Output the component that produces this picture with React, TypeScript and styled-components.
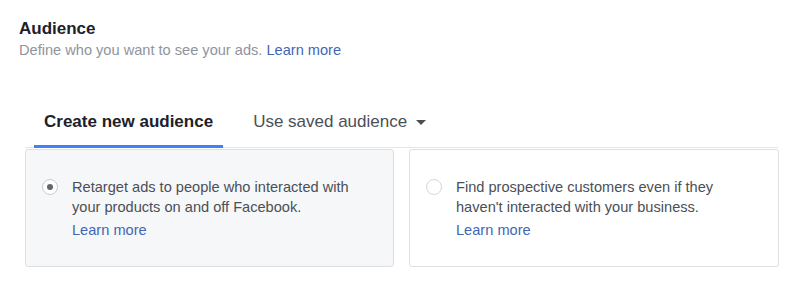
import React from "react";
import styled, { createGlobalStyle } from "styled-components";

const GlobalStyle = createGlobalStyle`
	html, body {
		margin: 0;
		padding: 0;
		background: #ffffff;
	}
	body {
		font-family: "Liberation Sans", Arial, Helvetica, sans-serif;
		-webkit-font-smoothing: antialiased;
	}
`;

const Page = styled.div`
	width: 800px;
	height: 292px;
	box-sizing: border-box;
	padding: 19px 22px 0 19px;
`;

const Title = styled.h2`
	margin: 0;
	font-size: 17px;
	line-height: 20px;
	font-weight: bold;
	color: #1d2129;
`;

const Subtitle = styled.p`
	margin: 1px 0 0;
	font-size: 14.6px;
	line-height: 20px;
	color: #90949c;
`;

const Link = styled.a`
	color: #4267b2;
	text-decoration: none;
	cursor: pointer;
`;

const Section = styled.div`
	margin: 42px 0 0 6px;
`;

const TabBar = styled.div`
	display: flex;
	align-items: flex-end;
	gap: 20px;
	padding-left: 9px;
	border-bottom: 1px solid #e4e6eb;
`;

const Tab = styled.button<{ $active?: boolean }>`
	display: flex;
	align-items: center;
	gap: 9px;
	height: 46px;
	padding: 0 10px 4px;
	margin-bottom: -1px;
	border: 0;
	border-bottom: 3px solid ${(p) => (p.$active ? "#4080ff" : "transparent")};
	background: none;
	font-family: inherit;
	font-size: 17px;
	font-weight: ${(p) => (p.$active ? "bold" : "normal")};
	color: ${(p) => (p.$active ? "#1d2129" : "#4b4f56")};
	cursor: pointer;
`;

const Caret = styled.span`
	width: 0;
	height: 0;
	margin-top: 1px;
	border-left: 5px solid transparent;
	border-right: 5px solid transparent;
	border-top: 5px solid #4b4f56;
`;

const Cards = styled.div`
	display: grid;
	grid-template-columns: 369px 370px;
	gap: 15px;
	margin-top: 1px;
`;

const Card = styled.label<{ $selected?: boolean }>`
	display: flex;
	align-items: flex-start;
	gap: 14px;
	box-sizing: border-box;
	height: 118px;
	padding: 27px 16px 0 16px;
	border: 1px solid #dddfe2;
	border-radius: 3px;
	background: ${(p) => (p.$selected ? "#f6f7f9" : "#ffffff")};
	cursor: pointer;
`;

const Radio = styled.span<{ $checked?: boolean }>`
	flex: none;
	display: flex;
	align-items: center;
	justify-content: center;
	width: 16px;
	height: 16px;
	margin-top: 2px;
	box-sizing: border-box;
	border-radius: 50%;
	border: 1px solid ${(p) => (p.$checked ? "#c7cbd1" : "#d3d6db")};
	background: #ffffff;

	&::after {
		content: "";
		display: ${(p) => (p.$checked ? "block" : "none")};
		width: 6px;
		height: 6px;
		border-radius: 50%;
		background: #606770;
	}
`;

const CardBody = styled.div`
	max-width: 292px;
	font-size: 14.6px;
	line-height: 20px;
	color: #4b4f56;
`;

const CardLink = styled(Link)`
	display: block;
	margin-top: 3px;
`;

const options = [
	{
		text: "Retarget ads to people who interacted with your products on and off Facebook.",
		selected: true,
	},
	{
		text: "Find prospective customers even if they haven't interacted with your business.",
		selected: false,
	},
];

const App = () => {
	return (
		<Page>
			<GlobalStyle />
			<Title>Audience</Title>
			<Subtitle>
				Define who you want to see your ads. <Link>Learn more</Link>
			</Subtitle>
			<Section>
				<TabBar>
					<Tab $active>Create new audience</Tab>
					<Tab>
						Use saved audience
						<Caret />
					</Tab>
				</TabBar>
				<Cards>
					{options.map((o) => (
						<Card key={o.text} $selected={o.selected}>
							<Radio $checked={o.selected} />
							<CardBody>
								{o.text}
								<CardLink>Learn more</CardLink>
							</CardBody>
						</Card>
					))}
				</Cards>
			</Section>
		</Page>
	);
};

export default App;
